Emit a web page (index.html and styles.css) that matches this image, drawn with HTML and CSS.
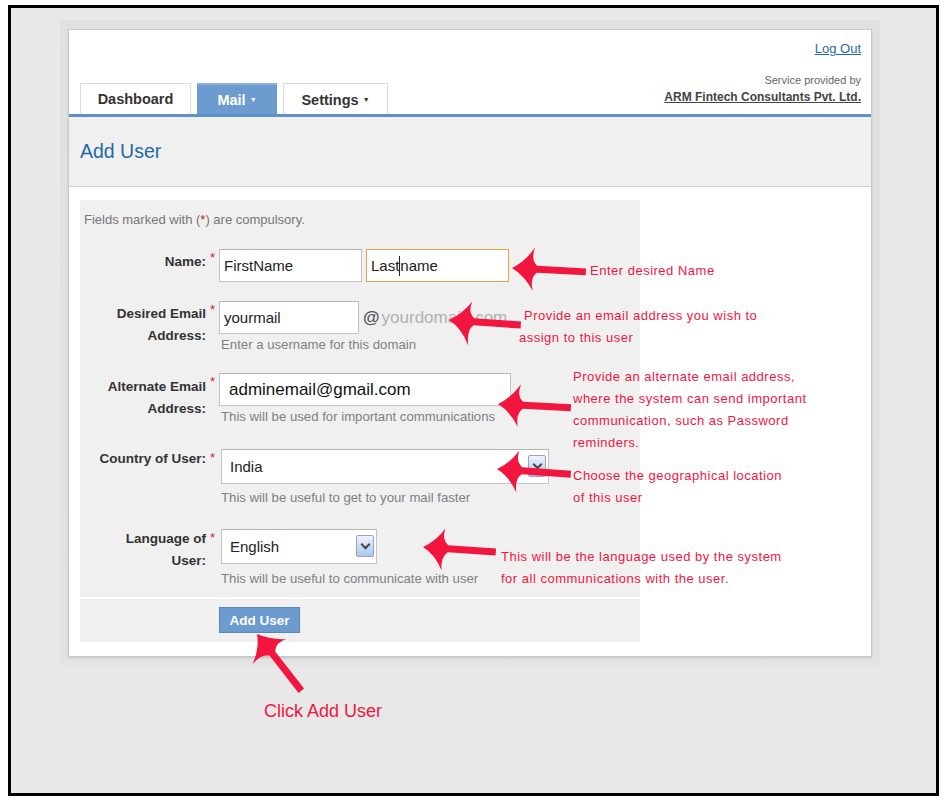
FILE: index.html
```html
<!DOCTYPE html>
<html lang="en">
<head>
  <meta charset="UTF-8" />
  <title>Add User</title>
  <link rel="stylesheet" href="styles.css">
</head>
<body>
  <div class="frame">
    <div class="shade">
      <div class="card">
        <div class="card-head">
          <ul class="tabs">
            <li class="tab">Dashboard</li>
            <li class="tab active">Mail<span class="caret-down">&#9660;</span></li>
            <li class="tab">Settings<span class="caret-down">&#9660;</span></li>
          </ul>
          <div class="provider">
            <a class="logout" href="#">Log Out</a>
            <div>
              <div class="provided">Service provided by</div>
              <a class="company" href="#">ARM Fintech Consultants Pvt. Ltd.</a>
            </div>
          </div>
        </div>

        <div class="title-bar">
          <h1>Add User</h1>
        </div>

        <div class="card-body">
          <form class="user-form">
            <p class="note">Fields marked with (<span class="req">*</span>) are compulsory.</p>

            <div class="row row-name">
              <label>Name:</label>
              <span class="req">*</span>
              <div class="fields">
                <div class="inline">
                  <div class="input w-first">FirstName</div>
                  <div class="input w-first focus">Last<span class="cursor"></span>name</div>
                </div>
              </div>
            </div>

            <div class="row row-email">
              <label>Desired Email<br>Address:</label>
              <span class="req">*</span>
              <div class="fields">
                <div class="inline">
                  <div class="input w-mail">yourmail</div>
                  <span class="at">@</span>
                  <span class="domain">yourdomain.com</span>
                </div>
                <div class="hint">Enter a username for this domain</div>
              </div>
            </div>

            <div class="row row-alt">
              <label>Alternate Email<br>Address:</label>
              <span class="req">*</span>
              <div class="fields">
                <div class="input w-alt big">adminemail@gmail.com</div>
                <div class="hint">This will be used for important communications</div>
              </div>
            </div>

            <div class="row row-country">
              <label>Country of User:</label>
              <span class="req">*</span>
              <div class="fields">
                <div class="select w-country">India<span class="drop"></span></div>
                <div class="hint">This will be useful to get to your mail faster</div>
              </div>
            </div>

            <div class="row row-lang">
              <label>Language of<br>User:</label>
              <span class="req">*</span>
              <div class="fields">
                <div class="select w-lang">English<span class="drop"></span></div>
                <div class="hint">This will be useful to communicate with user</div>
              </div>
            </div>

            <div class="actions">
              <button type="button" class="btn">Add User</button>
            </div>
          </form>
        </div>
      </div>
    </div>
  </div>

  <div class="notes">
    <div class="tip tip-name">Enter desired Name</div>
    <div class="tip tip-email"><span class="first">Provide an email address you wish to</span>assign to this user</div>
    <div class="tip tip-alt">Provide an alternate email address,<br>where the system can send important<br>communication, such as Password<br>reminders.</div>
    <div class="tip tip-country">Choose the geographical location<br>of this user</div>
    <div class="tip tip-lang">This will be the language used by the system<br>for all communications with the user.</div>
    <div class="tip tip-click">Click Add User</div>

    <svg class="arrows" width="950" height="800" viewBox="0 0 950 800">
      <g fill="#f2163f">
        <path transform="translate(512 268) rotate(3)" d="M0 0 Q13 -7 22 -22 Q18 -9 25 -3.5 L74 -3.5 L74 3.5 L25 3.5 Q18 9 22 22 Q13 7 0 0 Z"/>
        <path transform="translate(449 320) rotate(4)" d="M0 0 Q13 -7 22 -20 Q18 -9 25 -3.5 L72 -3.5 L72 3.5 L25 3.5 Q18 9 21 24 Q13 7 0 0 Z"/>
        <path transform="translate(498 404) rotate(3)" d="M0 0 Q13 -7 22 -21 Q18 -9 25 -3.5 L73 -3.5 L73 3.5 L25 3.5 Q18 9 21 22 Q13 7 0 0 Z"/>
        <path transform="translate(497 469) rotate(4)" d="M0 0 Q13 -7 21 -20 Q18 -9 25 -3.5 L74 -3.5 L74 3.5 L25 3.5 Q18 9 21 22 Q13 7 0 0 Z"/>
        <path transform="translate(423 547) rotate(4)" d="M0 0 Q13 -7 21 -20 Q18 -9 25 -3.5 L73 -3.5 L73 3.5 L25 3.5 Q18 9 20 22 Q13 7 0 0 Z"/>
        <path transform="translate(257 634) rotate(52)" d="M0 0 Q13 -7 22 -20 Q18 -9 25 -3.5 L72 -3.5 L72 3.5 L25 3.5 Q18 9 21 22 Q13 7 0 0 Z"/>
      </g>
    </svg>
  </div>
</body>
</html>
```

FILE: styles.css
```css
body {
  margin: 0;
  background: #fff;
  font-family: "Liberation Sans", Arial, sans-serif;
  position: relative;
  width: 950px;
  height: 800px;
  overflow: hidden;
}
.frame {
  box-sizing: border-box;
  margin: 5px 0 0 8px;
  width: 931px;
  height: 791px;
  border: 3px solid #000;
  background: #e8e8e8;
  padding: 12px 0 0 49px;
}
.shade {
  width: 804px;
  padding: 9px 8px 8px 8px;
  background: linear-gradient(#e0e0e0, #e3e3e3);
}
.card {
  box-sizing: border-box;
  width: 804px;
  height: 628px;
  background: #fff;
  border: 1px solid #c9c9c9;
  box-shadow: 0 1px 2px rgba(0,0,0,.15);
}

/* header */
.card-head {
  display: flex;
  justify-content: space-between;
  height: 84px;
  padding: 0 10px 0 11px;
}
.tabs {
  list-style: none;
  margin: 0;
  padding: 0;
  display: flex;
  align-items: flex-end;
  gap: 6px;
}
.tab {
  box-sizing: border-box;
  height: 31px;
  border: 1px solid #dcdcdc;
  border-bottom: 0;
  background: #fff;
  color: #333;
  font-weight: bold;
  font-size: 14.5px;
  line-height: 31px;
  text-align: center;
}
.tab:nth-child(1) { width: 111px; }
.tab:nth-child(2) { width: 80px; }
.tab:nth-child(3) { width: 105px; }
.tab.active {
  background: #6b9bcf;
  border-color: #6b9bcf;
  border-top: 2px solid #8ab2dc;
  color: #fff;
  line-height: 29px;
}
.caret-down {
  display: inline-block;
  font-size: 7px;
  vertical-align: 3px;
  margin-left: 4px;
}
.provider {
  display: flex;
  flex-direction: column;
  justify-content: space-between;
  align-items: flex-end;
  text-align: right;
  padding: 11px 0 8px;
}
.logout {
  color: #1d6aa6;
  font-size: 13px;
}
.provided {
  color: #666;
  font-size: 11px;
  line-height: 14px;
}
.company {
  color: #444;
  font-weight: bold;
  font-size: 12px;
  line-height: 17px;
}

.title-bar {
  height: 69px;
  border-top: 3px solid #5d91c9;
  border-bottom: 1px solid #cfcfcf;
  background: #f0f0f0;
  padding-left: 11px;
  display: flex;
  align-items: center;
}
.title-bar h1 {
  margin: 0;
  font-weight: normal;
  font-size: 19.5px;
  color: #1f6aa5;
}

/* form */
.card-body {
  padding: 13px 11px 0;
}
.user-form {
  width: 560px;
  height: 442px;
  background: #f0f0f0;
  color: #333;
}
.note {
  margin: 0;
  padding: 11px 0 0 4px;
  font-size: 13px;
  line-height: 18px;
  color: #777;
}
.req {
  color: #d42020;
  font-size: 13px;
}
.row {
  display: grid;
  grid-template-columns: 126px 13px auto;
  align-items: start;
}
.row label {
  text-align: right;
  font-weight: bold;
  font-size: 13.5px;
  line-height: 22px;
  color: #333;
  white-space: nowrap;
}
.row > .req {
  padding-left: 4px;
  line-height: 18px;
}
.row-name { margin-top: 20px; }
.row-name label { margin-top: 2px; }
.row-email { margin-top: 19px; }
.row-email label { margin-top: 2px; }
.row-alt { margin-top: 19px; }
.row-alt label { margin-top: 3px; }
.row-country { margin-top: 23px; }
.row-country label { margin-top: -1px; }
.row-lang { margin-top: 22px; }
.row-lang label { margin-top: -1px; }
.inline {
  display: flex;
  align-items: center;
  gap: 4px;
}
.input, .select {
  box-sizing: border-box;
  height: 33px;
  background: #fff;
  border: 1px solid #c4c4c4;
  border-top-color: #b4b4b4;
  padding-left: 4px;
  font-size: 15px;
  line-height: 31px;
  color: #222;
  position: relative;
}
.w-first { width: 143px; }
.w-first.focus { border-color: #e7a24a; }
.cursor {
  display: inline-block;
  width: 1px;
  height: 20px;
  background: #222;
  vertical-align: -5px;
}
.w-mail { width: 140px; }
.at {
  font-weight: bold;
  font-size: 17px;
  color: #555;
}
.domain {
  font-size: 17px;
  color: #b0b0b0;
  margin-left: -2px;
}
.w-alt { width: 292px; }
.input.big {
  font-size: 17px;
  padding-left: 9px;
  color: #111;
}
.hint {
  font-size: 13.2px;
  line-height: 18px;
  color: #808080;
  padding-left: 2px;
  margin-top: 2px;
}
.select {
  height: 35px;
  line-height: 33px;
  padding-left: 8px;
  margin-left: 2px;
}
.w-country { width: 328px; margin-bottom: 5px; }
.w-lang { width: 156px; margin-bottom: 6px; }
.drop {
  position: absolute;
  right: 2px;
  top: 5px;
  width: 18px;
  height: 22px;
  box-sizing: border-box;
  border: 1px solid #9c9fd0;
  border-radius: 2px;
  background: linear-gradient(#eef3fb, #a9c8ee);
}
.drop::after {
  content: "";
  position: absolute;
  left: 5px;
  top: 5px;
  width: 5px;
  height: 5px;
  border-right: 2px solid #444;
  border-bottom: 2px solid #444;
  transform: rotate(45deg);
}
.actions {
  margin-top: 9px;
  border-top: 2px solid #fff;
  padding: 8px 0 0 139px;
}
.btn {
  box-sizing: border-box;
  width: 81px;
  height: 26px;
  border: 1px solid #5a87b8;
  background: #6b9bcf;
  color: #fff;
  font-family: inherit;
  font-weight: bold;
  font-size: 13.5px;
  padding: 0;
}

/* annotations */
.notes {
  position: absolute;
  left: 0;
  top: 0;
  width: 950px;
  height: 800px;
  pointer-events: none;
}
.tip {
  position: absolute;
  font-size: 13px;
  line-height: 22px;
  letter-spacing: 0.5px;
  color: #f2163f;
  white-space: nowrap;
}
.tip-name { left: 590px; top: 260px; }
.tip-email { left: 519px; top: 305px; }
.tip-email .first { display: block; margin-left: 5px; }
.tip-alt { left: 573px; top: 366px; }
.tip-country { left: 573px; top: 465px; }
.tip-lang { left: 501px; top: 546px; }
.tip-click { left: 264px; top: 700px; font-size: 18px; letter-spacing: 0; }
.arrows {
  position: absolute;
  left: 0;
  top: 0;
}
```
